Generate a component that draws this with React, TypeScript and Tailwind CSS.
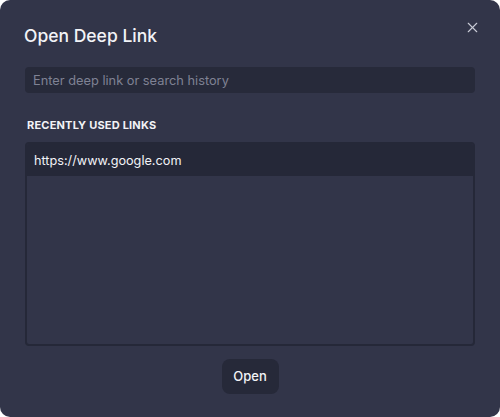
import { X } from "lucide-react";

const links = ["https://www.google.com"];

export default function App() {
  return (
    <div className="w-[500px] h-[417px] bg-white">
      <div
        className="relative flex h-full w-full flex-col rounded-[10px] bg-[#323549] px-[25px] text-white"
        style={{ fontFamily: "Inter, 'Noto Sans', sans-serif" }}
      >
        <button
          type="button"
          aria-label="Close"
          className="absolute right-[18px] top-[17px] flex h-[20px] w-[20px] items-center justify-center text-[#c9cbd6]"
        >
          <X className="h-[17px] w-[17px]" strokeWidth={1.6} />
        </button>

        <h2 className="mt-[25px] -ml-px text-[17.5px] font-medium leading-[22px] text-[#f2f3f7]">
          Open Deep Link
        </h2>

        <input
          type="text"
          placeholder="Enter deep link or search history"
          className="mt-[20px] h-[26px] w-full rounded-[4px] bg-[#272a3a] px-[8px] text-[12.8px] text-white placeholder:text-[#7f8294] outline-none"
        />

        <div className="mt-[25px] ml-[2px] text-[11px] font-bold leading-[14px] tracking-[0.2px] text-[#f2f3f7]">
          RECENTLY USED LINKS
        </div>

        <div className="mt-[10px] h-[204px] w-full overflow-hidden rounded-[4px] border-2 border-[#252838]">
          {links.map((link) => (
            <div
              key={link}
              className="flex h-[32px] items-center bg-[#252838] px-[7px] pt-px text-[12.7px] text-[#f2f3f7]"
            >
              {link}
            </div>
          ))}
        </div>

        <div className="mt-[13px] flex justify-center">
          <button
            type="button"
            className="h-[35px] w-[57px] rounded-[8px] bg-[#262939] text-[13px] font-medium text-[#f2f3f7]"
          >
            Open
          </button>
        </div>
      </div>
    </div>
  );
}
